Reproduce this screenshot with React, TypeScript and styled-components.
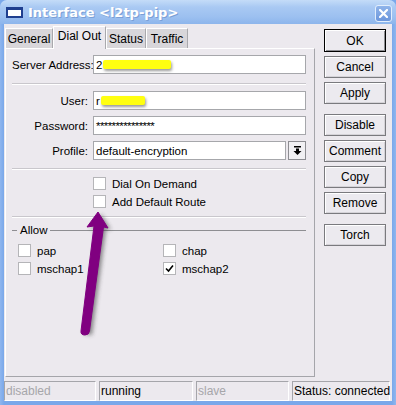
import styled, { createGlobalStyle } from 'styled-components'

const Global = createGlobalStyle`
  html, body { margin: 0; padding: 0; background: #7aa8ea; }
  body { font-family: "Liberation Sans", Arial, sans-serif; font-size: 11px; color: #000; }
`

const Frame = styled.div`
  position: relative;
  width: 396px;
  height: 405px;
  box-sizing: border-box;
  background: linear-gradient(to right, #8fb6ee, #7aa8ea 4px, #7aa8ea calc(100% - 4px), #8fb6ee);
  border-radius: 7px 7px 0 0;
  overflow: hidden;
  display: flex;
  flex-direction: column;
`

const TitleBar = styled.div`
  height: 24px;
  flex: none;
  display: flex;
  align-items: center;
  padding: 0 4px 0 6px;
  background: linear-gradient(to bottom, #c4dcf8 0%, #a9c9f3 30%, #9cc0f0 70%, #8db5ec 100%);
`

const TitleIcon = styled.div`
  width: 17px;
  height: 11px;
  box-sizing: border-box;
  border: 2px solid #1f3f8f;
  border-top-width: 3px;
  background: #fff;
  margin-right: 5px;
`

const TitleText = styled.div`
  flex: 1;
  color: #fff;
  font-family: "DejaVu Sans", Tahoma, sans-serif;
  font-size: 13px;
  font-weight: bold;
  text-shadow: 1px 1px 0 #7a9fd6;
`

const CloseBtn = styled.div`
  width: 17px;
  height: 17px;
  box-sizing: border-box;
  border: 1px solid #e2eefc;
  border-radius: 3px;
  background: linear-gradient(to bottom, #8fb4ea, #6d97dc);
  display: flex;
  align-items: center;
  justify-content: center;
  margin-top: 2px;
`

const Client = styled.div`
  flex: 1;
  margin: 0 4px 4px 4px;
  background: #ece9ee;
  display: flex;
  flex-direction: column;
`

const Main = styled.div`
  display: flex;
  flex: 1;
`

const LeftCol = styled.div`
  width: 310px;
  margin-left: 1px;
  display: flex;
  flex-direction: column;
`

const Tabs = styled.div`
  display: flex;
  align-items: flex-end;
  height: 24px;
  box-sizing: border-box;
  padding-top: 2px;
`

const Tab = styled.div<{ $active?: boolean; $w: number }>`
  width: ${p => p.$w}px;
  height: ${p => (p.$active ? 23 : 20)}px;
  box-sizing: border-box;
  display: flex;
  align-items: center;
  justify-content: center;
  border: 1px solid #fff;
  border-right-color: #a9a9ad;
  border-bottom: none;
  background: ${p => (p.$active ? '#ece9ee' : '#d8d6da')};
  margin-bottom: ${p => (p.$active ? -1 : 0)}px;
  position: relative;
  z-index: ${p => (p.$active ? 2 : 1)};
  font-size: 12px;
  padding-bottom: ${p => (p.$active ? 4 : 0)}px;
`

const Panel = styled.div`
  height: 329px;
  box-sizing: border-box;
  border: 1px solid #a5a5aa;
  border-left-color: #fff;
  border-top-color: #fff;
  padding: 6px 8px 0 6px;
  position: relative;
`

const Row = styled.div<{ $mt?: number }>`
  display: flex;
  align-items: center;
  height: 19px;
  margin-top: ${p => p.$mt ?? 0}px;
`

const Label = styled.div`
  width: 76px;
  text-align: right;
  margin-right: 5px;
  white-space: nowrap;
  font-size: 11.5px;
`

const Input = styled.div<{ $mask?: boolean }>`
  flex: 1;
  height: 19px;
  box-sizing: border-box;
  background: #fff;
  border: 1px solid #a6a7ab;
  padding: 0 2px;
  display: flex;
  align-items: center;
  white-space: nowrap;
  overflow: hidden;
  font-size: 11.5px;
  letter-spacing: ${p => (p.$mask ? '-0.6px' : 'normal')};
`

const Redact = styled.span<{ $w: number }>`
  display: inline-block;
  width: ${p => p.$w}px;
  height: 9px;
  background: #ffff10;
  margin-left: 1px;
  box-shadow: 1px 2px 3px rgba(0, 0, 0, 0.4);
  border-radius: 2px;
`

const DropBtn = styled.div`
  width: 18px;
  height: 19px;
  box-sizing: border-box;
  margin-left: 2px;
  border: 1px solid #8d8d92;
  background: #f1f0f3;
  display: flex;
  align-items: center;
  justify-content: center;
`

const Sep = styled.div<{ $mt: number }>`
  height: 1px;
  background: #c9c7cc;
  border-bottom: 1px solid #fff;
  margin-top: ${p => p.$mt}px;
`

const CheckRow = styled.div<{ $mt?: number; $ml?: number }>`
  display: flex;
  align-items: center;
  height: 13px;
  margin-top: ${p => p.$mt ?? 0}px;
  margin-left: ${p => p.$ml ?? 0}px;
  white-space: nowrap;
  font-size: 11.5px;
`

const Box = styled.span`
  width: 13px;
  height: 13px;
  box-sizing: border-box;
  border: 1px solid #b5b5b8;
  background: #fff;
  margin-right: 6px;
  display: flex;
  align-items: center;
  justify-content: center;
  flex: none;
`

const Group = styled.div`
  margin-top: 5px;
`

const GroupHead = styled.div`
  display: flex;
  align-items: center;
  height: 14px;
  font-size: 11.5px;
  &::before {
    content: '';
    width: 5px;
    height: 1px;
    background: #8e8e92;
    margin-right: 3px;
  }
  &::after {
    content: '';
    flex: 1;
    height: 1px;
    background: #8e8e92;
    margin-left: 3px;
  }
`

const GroupGrid = styled.div`
  display: grid;
  grid-template-columns: 145px 1fr;
  row-gap: 5px;
  margin-top: 7px;
  padding-left: 6px;
`

const RightCol = styled.div`
  width: 62px;
  margin-left: 9px;
  padding-top: 5px;
  display: flex;
  flex-direction: column;
`

const Button = styled.div<{ $default?: boolean; $mt?: number }>`
  height: ${p => (p.$default ? 23 : 22)}px;
  box-sizing: border-box;
  margin-top: ${p => p.$mt ?? 4}px;
  border: 1px solid ${p => (p.$default ? '#000' : '#7a7a7e')};
  box-shadow: inset 1px 1px 0 #fff, inset -1px -1px 0 ${p => (p.$default ? '#8d8d92' : '#d5d3d8')};
  background: #eceaef;
  display: flex;
  align-items: center;
  justify-content: center;
  font-size: 12px;
`

const StatusBar = styled.div`
  height: 22px;
  display: flex;
  gap: 3px;
  padding-top: 2px;
  box-sizing: border-box;
`

const Cell = styled.div<{ $w: number; $dim?: boolean }>`
  width: ${p => p.$w}px;
  height: 20px;
  box-sizing: border-box;
  border: 1px solid #a5a5aa;
  border-right-color: #fff;
  border-bottom-color: #fff;
  padding-left: 1px;
  display: flex;
  align-items: center;
  white-space: nowrap;
  font-size: 12px;
  color: ${p => (p.$dim ? '#a6a6aa' : '#000')};
`

const Overlay = styled.svg`
  position: absolute;
  left: 0;
  top: 0;
  pointer-events: none;
`

export default function App() {
  return (
    <>
      <Global />
      <Frame>
        <TitleBar>
          <TitleIcon />
          <TitleText>Interface &lt;l2tp-pip&gt;</TitleText>
          <CloseBtn>
            <svg width="9" height="9" viewBox="0 0 9 9">
              <path d="M1 1 L8 8 M8 1 L1 8" stroke="#fff" strokeWidth="2.2" strokeLinecap="square" />
            </svg>
          </CloseBtn>
        </TitleBar>
        <Client>
          <Main>
            <LeftCol>
              <Tabs>
                <Tab $w={48}>General</Tab>
                <Tab $w={53} $active>Dial Out</Tab>
                <Tab $w={40}>Status</Tab>
                <Tab $w={42}>Traffic</Tab>
              </Tabs>
              <Panel>
                <Row>
                  <Label>Server Address:</Label>
                  <Input>2<Redact $w={68} /></Input>
                </Row>
                <Sep $mt={9} />
                <Row $mt={6}>
                  <Label>User:</Label>
                  <Input>r<Redact $w={44} /></Input>
                </Row>
                <Row $mt={6}>
                  <Label>Password:</Label>
                  <Input $mask>***************</Input>
                </Row>
                <Row $mt={6}>
                  <Label>Profile:</Label>
                  <Input>default-encryption</Input>
                  <DropBtn>
                    <svg width="9" height="9" viewBox="0 0 9 9">
                      <rect x="1" y="0" width="7" height="1.5" fill="#000" />
                      <path d="M3 2.5 H6 V5 H8.5 L4.5 9 L0.5 5 H3 Z" fill="#000" />
                    </svg>
                  </DropBtn>
                </Row>
                <Sep $mt={8} />
                <CheckRow $mt={7} $ml={81}>
                  <Box />
                  Dial On Demand
                </CheckRow>
                <CheckRow $mt={5} $ml={81}>
                  <Box />
                  Add Default Route
                </CheckRow>
                <Sep $mt={8} />
                <Group>
                  <GroupHead>Allow</GroupHead>
                  <GroupGrid>
                    <CheckRow><Box />pap</CheckRow>
                    <CheckRow><Box />chap</CheckRow>
                    <CheckRow><Box />mschap1</CheckRow>
                    <CheckRow>
                      <Box>
                        <svg width="9" height="9" viewBox="0 0 9 9">
                          <path d="M1 4.5 L3.5 7 L8 1.5" stroke="#000" strokeWidth="1.6" fill="none" />
                        </svg>
                      </Box>
                      mschap2
                    </CheckRow>
                  </GroupGrid>
                </Group>
              </Panel>
            </LeftCol>
            <RightCol>
              <Button $default $mt={0}>OK</Button>
              <Button>Cancel</Button>
              <Button>Apply</Button>
              <Button $mt={10}>Disable</Button>
              <Button>Comment</Button>
              <Button>Copy</Button>
              <Button>Remove</Button>
              <Button $mt={10}>Torch</Button>
            </RightCol>
          </Main>
          <StatusBar>
            <Cell $w={92} $dim>disabled</Cell>
            <Cell $w={94}>running</Cell>
            <Cell $w={93} $dim>slave</Cell>
            <Cell $w={98}>Status: connected</Cell>
          </StatusBar>
        </Client>
        <Overlay width="396" height="405" viewBox="0 0 396 405">
          <defs>
            <filter id="sh" x="-50%" y="-50%" width="200%" height="200%">
              <feGaussianBlur stdDeviation="2" />
            </filter>
          </defs>
          <g transform="translate(3 2)" fill="#333" opacity="0.55" filter="url(#sh)">
            <path d="M98 212 L108 228 L103 227 L89 333 L81 332 L94 226 L87 227 Z" />
          </g>
          <path
            d="M98 212 L108 228 L103.5 227 L89.5 331 Q89 335 85 335 Q80.5 335 81 331 L94 226 L87 227 Z"
            fill="#800080"
            stroke="#800080"
            strokeWidth="1"
            strokeLinejoin="round"
          />
        </Overlay>
      </Frame>
    </>
  )
}
